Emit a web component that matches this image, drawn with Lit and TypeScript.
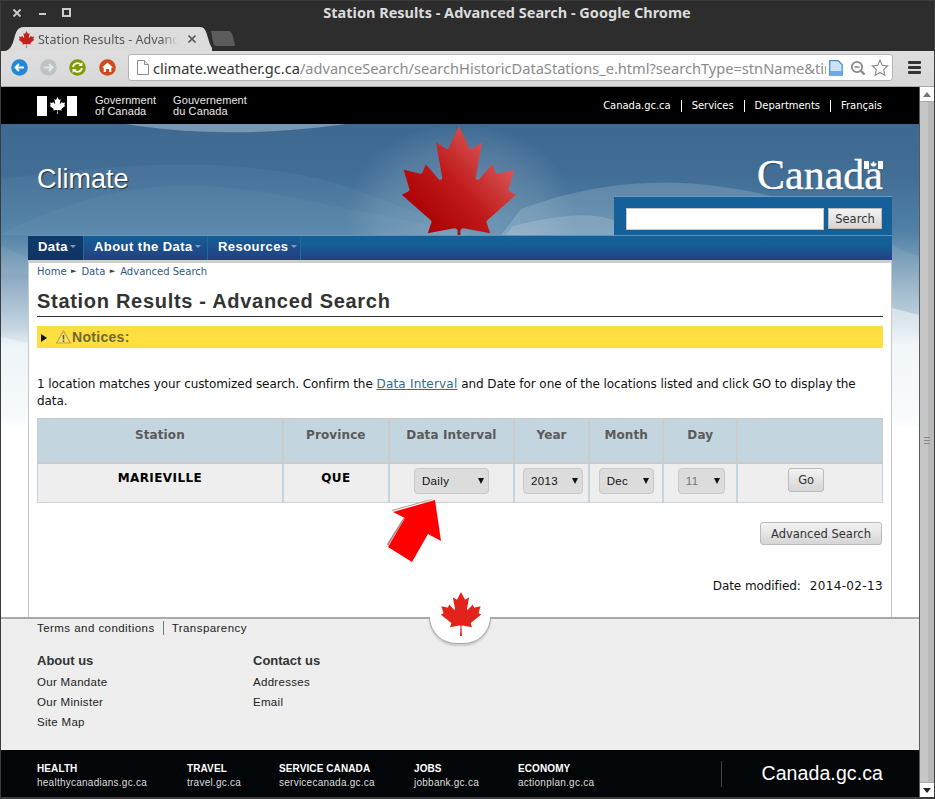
import { LitElement, html, css } from "lit";
import { customElement } from "lit/decorators.js";

const LEAF = "m-90 2030 45-863a95 95 0 0 0-111-98l-859 151 116-320a65 65 0 0 0-20-73l-941-762 212-99a65 65 0 0 0 34-79l-186-572 542 115a65 65 0 0 0 73-38l105-247 423 454a65 65 0 0 0 111-57l-204-1052 327 189a65 65 0 0 0 91-27l332-652 332 652a65 65 0 0 0 91 27l327-189-204 1052a65 65 0 0 0 111 57l423-454 105 247a65 65 0 0 0 73 38l542-115-186 572a65 65 0 0 0 34 79l212 99-941 762a65 65 0 0 0-20 73l116 320-859-151a95 95 0 0 0-111 98l45 863z";

const leaf = (cls: string, fill: string) => html`<svg class=${cls} viewBox="-2015 -2000 4030 4030" aria-hidden="true"><path d=${LEAF} fill=${fill}></path></svg>`;

@customElement("app-root")
export class AppRoot extends LitElement {
  static styles = css`
    :host { display: block; width: 935px; height: 799px; overflow: hidden; font-family: "DejaVu Sans", sans-serif; color: #000; }
    * { box-sizing: border-box; }
    a { color: inherit; text-decoration: none; }
    .window { width: 935px; height: 799px; display: flex; flex-direction: column; background: #2d2d2d; border: 1px solid #3c3c3c; border-width: 1px 1px 2px 1px; }

    .titlebar { height: 25px; flex: none; position: relative; display: flex; align-items: center; justify-content: center; padding: 0 0 3px 79px; font: bold 14.5px "Noto Sans", sans-serif; color: #dcdcdc; }
    .winctl { position: absolute; left: 10px; top: 6px; display: flex; align-items: center; gap: 14px; }
    .winctl svg { width: 12px; height: 12px; display: block; }
    .winctl svg:last-child { margin-left: -2px; }
    .tabs { height: 25px; flex: none; display: flex; align-items: flex-end; padding-left: 4px; }
    .tab { width: 207px; height: 25px; position: relative; display: flex; align-items: center; padding: 1px 0 0 13px; font: 12.5px "Noto Sans", sans-serif; color: #555; }
    .tab-shape { position: absolute; inset: 0; width: 207px; height: 25px; }
    .tab > :not(.tab-shape) { position: relative; }
    .fav { width: 17px; height: 17px; flex: none; margin-right: 3px; }
    .tab-title { width: 140px; overflow: hidden; white-space: nowrap; -webkit-mask-image: linear-gradient(to right, #000 88%, transparent); mask-image: linear-gradient(to right, #000 88%, transparent); }
    .tab-x { margin-left: 9px; width: 10px; height: 10px; }
    .newtab { width: 26px; height: 15px; margin: 0 0 5px -2px; }

    .toolbar { height: 36px; flex: none; background: linear-gradient(#dedede, #d8d8d8); display: flex; align-items: center; padding: 0 14px 2px 10px; border-bottom: 1px solid #a9a9a9; }
    .nav-ic { width: 17px; height: 17px; flex: none; margin-right: 12px; display: block; }
    .nav-ic.home { margin-left: 1px; }
    .omni { width: 765px; height: 27px; flex: none; background: #fff; border: 1px solid #b4b4b4; border-radius: 3px; display: flex; align-items: center; padding: 0 3px 0 8px; font: 14.6px "Noto Sans", sans-serif; color: #8b8b8b; }
    .omni .host { color: #333; }
    .url { flex: 1; min-width: 0; overflow: hidden; white-space: nowrap; margin-left: 4px; }
    .doc { width: 12px; height: 15px; flex: none; }
    .om-ic { flex: none; display: block; }
    .ic-page { margin: 0 7px 0 3px; }
    .ic-zoom { margin-right: 5px; }
    .burger { width: 13px; height: 13px; margin-left: 15px; flex: none; display: flex; flex-direction: column; justify-content: space-between; }
    .burger i { display: block; height: 3px; background: #333; border-radius: 1px; }

    .viewport { flex: 1; min-height: 0; display: flex; }
    .page { width: 918px; flex: none; display: flex; flex-direction: column; background: #fff; overflow: hidden; position: relative; }
    .scrollbar { width: 15px; flex: none; background: #fff; border-left: 1px solid #5a5a5a; display: flex; flex-direction: column; }
    .sb-btn { height: 15px; flex: none; background: #fdfdfd; display: flex; align-items: center; justify-content: center; border-bottom: 1px solid #aaa; }
    .sb-btn i { width: 0; height: 0; border-left: 4px solid transparent; border-right: 4px solid transparent; }
    .sb-up i { border-bottom: 5px solid #777; }
    .sb-down { border-bottom: 0; border-top: 1px solid #aaa; }
    .sb-down i { border-top: 5px solid #222; }
    .thumb { flex: 1; background: linear-gradient(to right, #c6c6c6 60%, #b9b9b9 60%); display: flex; flex-direction: column; align-items: center; justify-content: center; gap: 2px; padding-bottom: 4px; }
    .thumb i { width: 6px; height: 1px; background: #8a8a8a; }

    .gc { height: 37px; flex: none; background: #000; display: flex; align-items: center; color: #fff; padding: 0 37px 0 36px; }
    .sig { width: 40px; height: 20px; flex: none; display: flex; justify-content: space-between; align-items: center; margin: 0 18px 0 0; }
    .sig i { width: 10px; height: 20px; background: #fff; display: block; }
    .sig svg { width: 17px; height: 17px; }
    .gov { font: 11px/11px "Liberation Sans", sans-serif; margin-right: 17px; color: #e8e8e8; letter-spacing: 0.05px; }
    .gov.fr { letter-spacing: 0.1px; }
    .gc-links { margin-left: auto; display: flex; font-size: 10px; letter-spacing: -0.03px; }
    .gc-links a { padding: 0 10px; border-left: 1px solid #fff; line-height: 12px; }
    .gc-links a:first-child { border-left: 0; }
    .gc-links a:last-child { padding-right: 0; }

    .banner { flex: 1; min-height: 0; position: relative; background: linear-gradient(#3e6a92 0, #426e96 50px, #4f80a5 106px, #9ab5c9 166px, #c5d6e1 205px, #e6f0f5 222px, #f3f8fa 290px, #f8fbfc 300px, #fff 301px); }
    .waves { position: absolute; left: 0; top: 0; width: 918px; height: 300px; }
    .glow { position: absolute; left: 345px; top: 0; width: 230px; height: 180px; background: radial-gradient(closest-side, rgba(255,255,255,.22), rgba(255,255,255,.1) 70%, transparent); }
    .bigleaf { position: absolute; left: 396px; top: 2px; width: 124px; height: 110px; }
    .inner { position: relative; padding: 0 27px; display: flex; flex-direction: column; height: 100%; }
    .mast { height: 72px; flex: none; display: flex; justify-content: space-between; padding: 40px 9px 0; }
    .climate { font: 27px/30px "Liberation Sans", sans-serif; color: #fff; text-shadow: 1px 1px 1px rgba(0,0,0,.6); }
    .wordmark { position: relative; font: 42px/30px "Liberation Serif", serif; color: #fff; -webkit-text-stroke: 0.4px #fff; text-shadow: 1px 1px 1px rgba(20,50,80,.6); margin-top: -4px; height: 30px; }
    .wm-flag { position: absolute; right: 0; top: 1px; width: 19px; height: 8px; display: flex; justify-content: space-between; background: #3f6b92; align-items: stretch; -webkit-text-stroke: 0; }
    .wm-flag i { width: 5px; background: #fff; display: block; }
    .wm-flag svg { width: 7px; height: 7px; }
    .search-row { height: 39px; flex: none; display: flex; justify-content: flex-end; }
    .search { width: 278px; background: #16609a; border-top: 1px solid #6b9cc0; display: flex; align-items: center; gap: 4px; padding: 5px 10px 0 12px; }
    .search input { width: 198px; height: 22px; background: #fff; border: 1px solid #c8c8c8; padding: 0; flex: none; }
    .search button, .btn { font: 11.5px "DejaVu Sans", sans-serif; color: #333; background: linear-gradient(#f3f3f3, #d5d5d5); border: 1px solid #bbb; padding: 0; height: 21px; width: 54px; }
    .nav { height: 25px; flex: none; display: flex; background: linear-gradient(#156098 0, #155f97 40%, #243f80); font: bold 13px "Liberation Sans", sans-serif; color: #fff; letter-spacing: 0.45px; border-top: 1px solid #5f95bd; }
    .nav a { display: flex; align-items: center; padding: 0 0 3px 10px; border-right: 1px solid #1d6b9d; }
    .nav a::after { content: ""; margin: 0 4px 0 2px; border-left: 3px solid transparent; border-right: 3px solid transparent; border-top: 3px solid #7d9cbc; }
    .nav a.active { background: linear-gradient(#103a6c, #0f3461); padding-right: 1px; width: 56px; }
    .nav a:nth-child(2) { width: 124px; background: linear-gradient(#155f97, #243f80); }
    .nav a:nth-child(3) { width: 93px; background: linear-gradient(#155f97, #243f80); }
    .content { flex: 1; min-height: 0; background: #fff; border-top: 3px solid #cdcdcd; border-left: 1px solid #c9c9c9; border-right: 1px solid #c9c9c9; padding: 0 8px; position: relative; }
    .crumbs { display: flex; align-items: center; height: 16px; font-size: 10px; color: #2e5a87; }
    .crumbs i { font-style: normal; font-size: 7px; margin: 0 5px 0 4.5px; color: #444; }
    h1 { margin: 0; font: bold 20px/25px "Liberation Sans", sans-serif; color: #333; letter-spacing: 0.7px; padding: 10px 0 2px; border-bottom: 1px solid #333; }
    .notice { height: 22px; margin-top: 9px; background: linear-gradient(#fddc3f, #ffe041 70%, #ffdd3c); display: flex; align-items: center; font: bold 14px "Liberation Sans", sans-serif; letter-spacing: 0.3px; color: #6e6a33; padding-left: 4px; }
    .notice .tri { width: 0; height: 0; border-left: 6px solid #111; border-top: 4px solid transparent; border-bottom: 4px solid transparent; margin: 2px 9px 0 0; }
    .notice svg { width: 15px; height: 14px; margin-right: 1px; }
    p { margin: 28px 0 0; font-size: 12px; line-height: 17px; color: #111; letter-spacing: -0.08px; }
    p a { color: #2f6b8f; text-decoration: underline; letter-spacing: 0.2px; }
    table { border-collapse: collapse; table-layout: fixed; width: 846px; margin-top: 8px; font-size: 12px; font-weight: bold; text-align: center; letter-spacing: 0.1px; }
    .c1 { width: 245px; } .c2 { width: 106px; } .c3 { width: 125px; } .c4 { width: 75px; } .c5, .c6 { width: 74px; } .c7 { width: 145px; }
    th { height: 44px; background: #c3d5df; border: 2px solid #cbcbcb; border-width: 1px 1px 2px 2px; color: #5a5a5a; vertical-align: top; padding: 9px 0 0; }
    th:first-child { border-left: 1px solid #cbcbcb; }
    td { height: 40px; background: #eee; border: 1px solid #c3d5df; border-width: 0 1px 1px 2px; vertical-align: top; padding: 7px 0 0; letter-spacing: 0.4px; }
    td:first-child { border-left-width: 1px; }
    td.ctl { padding-top: 4px; }
    .sel { display: inline-flex; position: relative; height: 26px; vertical-align: top; }
    .sel select { appearance: none; -webkit-appearance: none; width: 100%; height: 26px; border: 1px solid #c9c9c9; border-radius: 4px; background: #dcdcdc; font: 11.5px "Liberation Sans", sans-serif; letter-spacing: 0.35px; color: #111; padding: 1px 0 0 7px; margin: 0; }
    .sel select:disabled { color: #777; opacity: 1; }
    .sel i { position: absolute; right: 5px; top: 10px; border-left: 3.5px solid transparent; border-right: 3.5px solid transparent; border-top: 6px solid #111; }
    .s-int { width: 75px; } .s-year { width: 60px; margin-left: 3px; } .s-mon { width: 55px; } .s-day { width: 47px; margin-left: 2px; }
    .btn { display: inline-block; border-radius: 3px; font-size: 11.5px; }
    .go { width: 36px; height: 24px; margin-right: 8px; }
    .adv-row { display: flex; justify-content: flex-end; padding: 19px 1px 0 0; }
    .adv { width: 122px; height: 23px; }
    .modified { display: flex; justify-content: flex-end; gap: 9px; margin-top: 34px; font-size: 12px; line-height: 15px; color: #111; }
    .modified span:last-child { letter-spacing: 0.35px; }
    .modified span:first-child { letter-spacing: -0.08px; }

    .arrow { position: absolute; left: 385px; top: 410px; width: 57px; height: 66px; }

    .foot { height: 133px; flex: none; background: #eee; border-top: 2px solid #a9a9a9; position: relative; padding: 2px 36px 0; font: 11.5px "Liberation Sans", sans-serif; letter-spacing: 0.3px; color: #222; }
    .foot-links { display: flex; line-height: 14px; letter-spacing: 0.45px; }
    .foot-links a + a { margin-left: 8px; padding-left: 8px; border-left: 1px solid #777; }
    .cols { display: flex; margin-top: 18px; }
    .col { width: 216px; display: flex; flex-direction: column; gap: 6px; line-height: 14px; }
    .col h2 { margin: 0; font: bold 13px/16px "Liberation Sans", sans-serif; color: #333; letter-spacing: 0; }
    .bump { position: absolute; left: 428px; top: -2px; width: 62px; height: 27px; background: #fff; border: 1px solid #a9a9a9; border-top: 0; border-radius: 0 0 31px 31px; box-shadow: 0 2px 2px rgba(0,0,0,.15); }
    .footleaf { position: absolute; left: 438px; top: -27px; width: 44px; height: 44px; }
    .black { height: 47px; flex: none; background: #030608; color: #fff; display: flex; align-items: center; padding: 4px 36px 0; font: 10px/14px "Liberation Sans", sans-serif; position: relative; letter-spacing: 0.25px; }
    .ext { display: flex; flex-direction: column; }
    .ext b { letter-spacing: 0.1px; }
    .ext span { color: #ddd; }
    .e1 { width: 150px; } .e2 { width: 92px; } .e3 { width: 135px; } .e4 { width: 104px; } .e5 { width: 203px; }
    .gcca { margin: -4px 0 0 auto; border-left: 1px solid #444; height: 26px; width: 162px; display: flex; align-items: center; justify-content: flex-end; font: 19.5px "Liberation Sans", sans-serif; letter-spacing: 0.1px; }
  `;

  render() {
    const ext: [string, string, string][] = [
      ["HEALTH", "healthycanadians.gc.ca", "e1"],
      ["TRAVEL", "travel.gc.ca", "e2"],
      ["SERVICE CANADA", "servicecanada.gc.ca", "e3"],
      ["JOBS", "jobbank.gc.ca", "e4"],
      ["ECONOMY", "actionplan.gc.ca", "e5"],
    ];
    return html`
      <div class="window">
        <div class="titlebar">
          <div class="winctl">
            <svg viewBox="0 0 12 12"><path d="M2.5 2.5l7 7M9.5 2.5l-7 7" stroke="#ccc" stroke-width="1.8"></path></svg>
            <svg viewBox="0 0 12 12"><path d="M2 7h7" stroke="#ccc" stroke-width="2"></path></svg>
            <svg viewBox="0 0 12 12"><rect x="2" y="2" width="7" height="7" fill="none" stroke="#ccc" stroke-width="2"></rect></svg>
          </div>
          Station Results - Advanced Search - Google Chrome
        </div>
        <div class="tabs">
          <div class="tab">
            <svg class="tab-shape" viewBox="0 0 207 25" aria-hidden="true"><path d="M0 25C5 24 7 20 9 13 11 6 12 1 19 1H195C200 1 201 5 203 12 205 19 207 24 211 25Z" fill="#dcdcdc"></path></svg>
            ${leaf("fav", "#c5201f")}
            <span class="tab-title">Station Results - Advanced Search</span>
            <svg class="tab-x" viewBox="0 0 10 10"><path d="M1.5 1.5l7 7M8.5 1.5l-7 7" stroke="#555" stroke-width="1.7"></path></svg>
          </div>
          <svg class="newtab" viewBox="0 0 26 15" aria-hidden="true"><path d="M1 0H18C21 0 22 2 23 6L25 14 C25 15 24 15 23 15H6C5 15 4 14 3 11Z" fill="#5c5c5c"></path></svg>
        </div>
        <div class="toolbar">
          <svg class="nav-ic" viewBox="0 0 17 17"><circle cx="8.5" cy="8.5" r="8.3" fill="#1f88d9"></circle><path d="M13 8.5H5M8 5L4.5 8.5 8 12" fill="none" stroke="#fff" stroke-width="2"></path></svg>
          <svg class="nav-ic" viewBox="0 0 17 17"><circle cx="8.5" cy="8.5" r="8.3" fill="#bcc2c5"></circle><path d="M4 8.5h8M9 5l3.5 3.5L9 12" fill="none" stroke="#e6e6e6" stroke-width="2"></path></svg>
          <svg class="nav-ic" viewBox="0 0 17 17"><circle cx="8.5" cy="8.5" r="8.3" fill="#7d9a09"></circle><path d="M4 8a4.6 4.6 0 0 1 8-2.2M13 9a4.6 4.6 0 0 1-8 2.2" fill="none" stroke="#f4f6e2" stroke-width="1.8"></path><path d="M13.5 3v4h-4zM3.5 14v-4h4z" fill="#f4f6e2"></path></svg>
          <svg class="nav-ic home" viewBox="0 0 17 17"><circle cx="8.5" cy="8.5" r="8.3" fill="#d3491b"></circle><path d="M8.5 3.5L14 8.5h-1.7V13H10V10H7v3H4.7V8.5H3z" fill="#fff"></path></svg>
          <div class="omni">
            <svg class="doc" viewBox="0 0 12 15"><path d="M.5.5h7l4 4v10H.5z" fill="#fff" stroke="#8d8d8d"></path><path d="M7.5.5v4h4" fill="#e8e8e8" stroke="#8d8d8d"></path></svg>
            <div class="url"><span class="host">climate.weather.gc.ca</span>/advanceSearch/searchHistoricDataStations_e.html?searchType=stnName&amp;timeframe=1</div>
            <svg class="om-ic ic-page" width="14" height="16" viewBox="0 0 14 16"><path d="M.7.7h8.5l4 4v10.5H.7z" fill="#cfe3f8" stroke="#4a8fd6" stroke-width="1.3"></path><path d="M1 11h12v4H1z" fill="#6aa9ea"></path></svg>
            <svg class="om-ic ic-zoom" width="16" height="16" viewBox="0 0 16 16"><circle cx="7" cy="7" r="5.2" fill="none" stroke="#8a8a8a" stroke-width="1.8"></circle><path d="M4.5 7h5" stroke="#8a8a8a" stroke-width="1.5"></path><path d="M10.5 10.5l4 4" stroke="#8a8a8a" stroke-width="2.4"></path></svg>
            <svg class="om-ic" width="18" height="18" viewBox="0 0 18 18"><path d="M9 1.3l2.3 5.1 5.4.6-4 3.7 1.1 5.5L9 13.5l-4.8 2.7 1.1-5.5-4-3.7 5.4-.6z" fill="#fff" stroke="#8a8a8a" stroke-width="1.1"></path></svg>
          </div>
          <div class="burger"><i></i><i></i><i></i></div>
        </div>
        <div class="viewport">
          <div class="page">
            <div class="gc">
              <div class="sig"><i></i>${leaf("", "#fff")}<i></i></div>
              <div class="gov">Government<br />of Canada</div>
              <div class="gov fr">Gouvernement<br />du Canada</div>
              <div class="gc-links"><a href="#">Canada.gc.ca</a><a href="#">Services</a><a href="#">Departments</a><a href="#">Français</a></div>
            </div>
            <div class="banner">
              <svg class="waves" viewBox="0 0 918 300" aria-hidden="true">
                <path d="M125 0C190 11 270 11 345 0Z" fill="#fff" fill-opacity=".3"></path>
                <path d="M0 55C120 40 260 25 380 75 440 98 460 105 470 111H0Z" fill="#fff" fill-opacity=".04"></path>
                <path d="M0 110C100 60 180 50 300 75 370 90 430 100 470 111H0Z" fill="#fff" fill-opacity=".04"></path>
                <path d="M520 85C600 55 680 50 770 72H613V111H500Z" fill="#fff" fill-opacity=".16"></path>
                <path d="M512 102C560 90 590 88 613 96V111H505Z" fill="#fff" fill-opacity=".16"></path>
                <path d="M0 213L27 219V300H0Z" fill="#fff" fill-opacity=".3"></path>
                <path d="M0 122C10 127 20 131 27 133V150H0Z" fill="#fff" fill-opacity=".06"></path>
                <path d="M891 120C900 126 910 130 918 132V230H891Z" fill="#fff" fill-opacity=".08"></path>
                <path d="M891 184L918 191V300H891Z" fill="#fff" fill-opacity=".45"></path>
              </svg>
              <div class="glow"></div>
              <svg class="bigleaf" viewBox="-2015 -2000 4030 3300" preserveAspectRatio="none" aria-hidden="true">
                <defs><linearGradient id="lg" x1="0.2" y1="0.9" x2="0.85" y2="0.2"><stop offset="0.2" stop-color="#ae0606"></stop><stop offset="0.55" stop-color="#c01a1a"></stop><stop offset="1" stop-color="#d85656"></stop></linearGradient></defs>
                <path d=${LEAF} fill="url(#lg)"></path>
              </svg>
              <div class="inner">
                <div class="mast">
                  <div class="climate">Climate</div>
                  <div class="wordmark">Canada<span class="wm-flag"><i></i>${leaf("", "#fff")}<i></i></span></div>
                </div>
                <div class="search-row"><div class="search"><input type="text" aria-label="Search" /><button>Search</button></div></div>
                <div class="nav"><a class="active" href="#">Data</a><a href="#">About the Data</a><a href="#">Resources</a></div>
                <div class="content">
                  <div class="crumbs"><a href="#">Home</a><i>►</i><a href="#">Data</a><i>►</i><a href="#">Advanced Search</a></div>
                  <h1>Station Results - Advanced Search</h1>
                  <div class="notice"><span class="tri"></span>
                    <svg viewBox="0 0 15 14"><path d="M7.5 1L14.5 13H.5z" fill="#f7e27a" stroke="#bfa62a" stroke-width="1.2"></path><path d="M7.5 5v4.5M7.5 10.5v1.5" stroke="#665b20" stroke-width="1.5"></path></svg>
                    Notices:</div>
                  <p>1 location matches your customized search. Confirm the <a href="#">Data Interval</a> and Date for one of the locations listed and click GO to display the data.</p>
                  <table>
                    <colgroup><col class="c1" /><col class="c2" /><col class="c3" /><col class="c4" /><col class="c5" /><col class="c6" /><col class="c7" /></colgroup>
                    <thead><tr><th>Station</th><th>Province</th><th>Data Interval</th><th>Year</th><th>Month</th><th>Day</th><th></th></tr></thead>
                    <tbody><tr>
                      <td>MARIEVILLE</td><td>QUE</td>
                      <td class="ctl"><span class="sel s-int"><select aria-label="Data Interval"><option>Daily</option></select><i></i></span></td>
                      <td class="ctl"><span class="sel s-year"><select aria-label="Year"><option>2013</option></select><i></i></span></td>
                      <td class="ctl"><span class="sel s-mon"><select aria-label="Month"><option>Dec</option></select><i></i></span></td>
                      <td class="ctl"><span class="sel s-day"><select aria-label="Day" disabled><option>11</option></select><i></i></span></td>
                      <td class="ctl"><button class="btn go">Go</button></td>
                    </tr></tbody>
                  </table>
                  <div class="adv-row"><button class="btn adv">Advanced Search</button></div>
                  <div class="modified"><span>Date modified:</span><span>2014-02-13</span></div>
                </div>
              </div>
            </div>
            <div class="foot">
              <div class="bump"></div>
              ${leaf("footleaf", "#e3231b")}
              <div class="foot-links"><a href="#">Terms and conditions</a><a href="#">Transparency</a></div>
              <div class="cols">
                <div class="col"><h2>About us</h2><a href="#">Our Mandate</a><a href="#">Our Minister</a><a href="#">Site Map</a></div>
                <div class="col"><h2>Contact us</h2><a href="#">Addresses</a><a href="#">Email</a></div>
              </div>
            </div>
            <div class="black">
              ${ext.map(([t, u, w]) => html`<div class="ext ${w}"><b>${t}</b><span>${u}</span></div>`)}
              <div class="gcca">Canada.gc.ca</div>
            </div>
            <svg class="arrow" viewBox="386 497 57 66" aria-hidden="true">
              <path d="M392 511L434 499 428 500 392 510ZM387 544L404 517 405 518 388 546Z" fill="#a88"></path>
              <path d="M393 512L435 500 441 541 428 534 412 562 388 547 405 518Z" fill="#f00"></path>
            </svg>
          </div>
          <div class="scrollbar">
            <div class="sb-btn sb-up"><i></i></div>
            <div class="thumb"><i></i><i></i><i></i></div>
            <div class="sb-btn sb-down"><i></i></div>
          </div>
        </div>
      </div>
    `;
  }
}
